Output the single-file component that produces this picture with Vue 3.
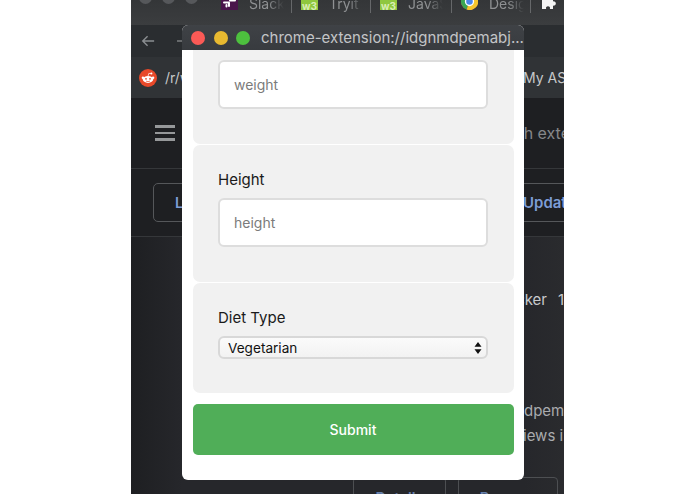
<script setup>
const tabs = [
  { name: 'Slack', icon: 'slack', width: 71 },
  { name: 'Tryit', icon: 'w3', width: 70 },
  { name: 'JavaScript', icon: 'w3', width: 72 },
  { name: 'Design', icon: 'chrome', width: 70 }
]
</script>

<template>
  <div class="stage">
    <div class="browser">
      <div class="tabs">
        <div class="lights"><i></i><i></i><i></i></div>
        <div v-for="tab in tabs" :key="tab.name" class="tab" :style="{ width: tab.width + 'px' }">
          <svg v-if="tab.icon === 'slack'" class="tab-icon" viewBox="0 0 17 17">
            <rect width="17" height="17" fill="#4a154b" />
            <path d="M3 9.5h5M9 7.5h5M5.5 12v1.5M11 5v2M8 10v3" stroke="#fff" stroke-width="2" stroke-linecap="round" fill="none" />
          </svg>
          <span v-else-if="tab.icon === 'w3'" class="tab-icon w3">w3</span>
          <svg v-else class="tab-icon" viewBox="0 0 18 18">
            <circle cx="9" cy="9" r="9" fill="#d8433a" />
            <path d="M9 9 1.2 4.5A9 9 0 0 0 6 17.5Z" fill="#3ba653" />
            <path d="M9 9 17.6 6A9 9 0 0 1 6 17.5Z" fill="#f5c52d" />
            <circle cx="9" cy="9" r="4.2" fill="#4a86e8" stroke="#fff" stroke-width="1.4" />
          </svg>
          <span class="tab-name">{{ tab.name }}</span>
        </div>
        <svg class="puzzle" viewBox="0 0 16 16">
          <path d="M1 4h11v3.4a2.2 2.2 0 1 1 0 4.2V15H8.8a2 2 0 1 0-3.6 0H1Z" fill="#f4f4f4" />
        </svg>
      </div>

      <div class="toolbar">
        <svg class="back" viewBox="0 0 16 14">
          <path d="M15 7H2M7.5 1.5 2 7l5.5 5.5" fill="none" stroke="#8b8e91" stroke-width="1.6" />
        </svg>
        <svg class="forward" viewBox="0 0 16 14">
          <path d="M0 7h15" fill="none" stroke="#77797c" stroke-width="1.6" />
        </svg>
      </div>

      <div class="bookmarks">
        <svg class="reddit" viewBox="0 0 18 18">
          <circle cx="9" cy="9" r="9" fill="#e8492a" />
          <ellipse cx="9" cy="10.4" rx="5.2" ry="3.5" fill="#fff" />
          <circle cx="3.9" cy="8.7" r="1.2" fill="#fff" />
          <circle cx="14.1" cy="8.7" r="1.2" fill="#fff" />
          <circle cx="12.4" cy="4.5" r="1" fill="#fff" />
          <path d="M9 7.2 9.8 4.4l2.4.2" fill="none" stroke="#fff" stroke-width=".7" />
          <circle cx="7" cy="9.8" r=".9" fill="#e8492a" />
          <circle cx="11" cy="9.8" r=".9" fill="#e8492a" />
          <path d="M7 12c1.2.8 2.8.8 4 0" fill="none" stroke="#e8492a" stroke-width=".7" />
        </svg>
        <span class="bookmark">/r/webdev</span>
        <span class="bookmark right">My ASU</span>
      </div>

      <div class="header">
        <div class="menu"><i></i><i></i><i></i></div>
        <span class="search">Search extensions</span>
      </div>

      <div class="actions">
        <div class="action load">Load unpacked</div>
        <div class="action update">Update</div>
      </div>

      <div class="ext-list">
        <div class="ext-title"><span class="ext-name">Diet Tracker</span><span class="ext-version">1.0</span></div>
        <div class="ext-id">dpemabjkl</div>
        <div class="ext-views">iews in</div>
        <div class="ext-buttons">
          <div class="ext-button details">Details</div>
          <div class="ext-button remove">Remove</div>
        </div>
      </div>
    </div>

    <div class="popup">
      <div class="titlebar">
        <div class="traffic"><i class="red"></i><i class="amber"></i><i class="green"></i></div>
        <span class="url">chrome-extension://idgnmdpemabj...</span>
      </div>
      <form class="body" @submit.prevent>
        <div class="card clipped">
          <input class="field" type="text" placeholder="weight" />
        </div>
        <div class="card">
          <label class="label">Height</label>
          <input class="field" type="text" placeholder="height" />
        </div>
        <div class="card last">
          <label class="label">Diet Type</label>
          <div class="select-wrap">
            <select class="select">
              <option>Vegetarian</option>
              <option>Vegan</option>
            </select>
            <svg class="select-arrows" viewBox="0 0 8 12">
              <path d="M4 0 7.5 4.8H.5ZM4 12 .5 7.2h7Z" fill="#111" />
            </svg>
          </div>
        </div>
        <button class="submit" type="submit">Submit</button>
      </form>
    </div>
  </div>
</template>

<style>
html, body { margin: 0; background: #fff; }
</style>

<style scoped>
.stage {
  position: relative;
  width: 695px;
  height: 494px;
  overflow: hidden;
  background: #fff;
  font-family: Inter, "Liberation Sans", sans-serif;
}
.browser {
  display: flex;
  flex-direction: column;
  width: 433px;
  height: 494px;
  margin-left: 131px;
  overflow: hidden;
  background: linear-gradient(90deg, #1e1f22, #26272b 52px, #26272b 393px, #2a2b2e);
}
.tabs {
  flex: 0 0 25px;
  display: flex;
  align-items: flex-start;
  overflow: hidden;
  background: linear-gradient(#343638, #3b3d3f);
}
.lights {
  display: flex;
  gap: 10px;
  width: 90px;
  margin-top: -9px;
  padding-left: 8px;
  box-sizing: border-box;
}
.lights i {
  width: 13px;
  height: 13px;
  border-radius: 50%;
  background: #56585b;
}
.tab {
  flex: 0 0 auto;
  box-sizing: border-box;
  display: flex;
  align-items: center;
  height: 20px;
  margin-top: -7px;
  margin-right: 9px;
  overflow: hidden;
  border-right: 1px solid #66686a;
}
.tab-icon {
  flex: 0 0 17px;
  width: 17px;
  height: 17px;
  margin-top: -4px;
}
.w3 {
  box-sizing: border-box;
  background: #8fc73e;
  color: #d9eeb4;
  font-size: 10px;
  line-height: 26px;
  text-align: center;
  font-weight: 700;
}
.tab-name {
  margin-left: 11px;
  width: 35px;
  overflow: hidden;
  white-space: nowrap;
  color: #8f9193;
  font-size: 14px;
  -webkit-mask-image: linear-gradient(90deg, #000 55%, transparent);
  mask-image: linear-gradient(90deg, #000 55%, transparent);
}
.puzzle {
  flex: 0 0 16px;
  width: 16px;
  height: 16px;
  margin-top: -6px;
  margin-left: 1px;
}
.toolbar {
  flex: 0 0 32px;
  display: flex;
  align-items: center;
  padding-left: 10px;
  background: #2a2d30;
}
.back {
  width: 14px;
  height: 14px;
  margin-top: -1px;
}
.forward {
  width: 16px;
  height: 14px;
  margin-top: -1px;
  margin-left: 22px;
}
.bookmarks {
  flex: 0 0 41px;
  display: flex;
  align-items: center;
  box-sizing: border-box;
  padding-left: 8px;
  background: #303336;
}
.reddit {
  width: 18px;
  height: 18px;
}
.bookmark {
  margin-left: 8px;
  color: #c6c8ca;
  font-size: 14px;
  white-space: nowrap;
}
.bookmark.right {
  margin-left: auto;
  width: 41px;
  overflow: hidden;
}
.header {
  flex: 0 0 71px;
  display: flex;
  align-items: center;
  box-sizing: border-box;
  border-bottom: 1px solid #35373a;
  padding-left: 24px;
  overflow: hidden;
  background: #1e1f22;
}
.menu {
  flex: 0 0 20px;
  display: flex;
  flex-direction: column;
  gap: 4px;
}
.menu i {
  height: 2.5px;
  background: #96989a;
}
.search {
  flex: 0 0 auto;
  margin-left: 305px;
  white-space: nowrap;
  color: #85878a;
  font-size: 16px;
}
.actions {
  flex: 0 0 68px;
  display: flex;
  align-items: center;
  justify-content: space-between;
  box-sizing: border-box;
  border-bottom: 1px solid #35373a;
  padding-left: 22px;
  overflow: hidden;
  background: #1e1f22;
}
.action {
  box-sizing: border-box;
  height: 39px;
  display: flex;
  align-items: center;
  border: 1px solid #55575a;
  color: #7d9dd6;
  font-size: 14.5px;
  font-weight: 600;
  white-space: nowrap;
}
.load {
  width: 130px;
  padding-left: 21px;
  border-radius: 5px;
}
.update {
  flex: 0 0 41px;
  overflow: hidden;
  border-left: 0;
  border-right: 0;
  font-size: 15px;
}
.ext-list {
  flex: 1;
  display: flex;
  flex-direction: column;
  color: #a9abae;
  font-size: 15px;
  white-space: nowrap;
  overflow: hidden;
}
.ext-title {
  display: flex;
  margin-top: 53px;
}
.ext-name {
  flex: 0 0 428px;
  margin-left: -12px;
  text-align: right;
  color: #c8cacc;
}
.ext-version {
  margin-left: 11px;
  color: #c8cacc;
}
.ext-id {
  margin-top: 92px;
  padding-left: 393px;
}
.ext-views {
  margin-top: 6px;
  padding-left: 392px;
}
.ext-buttons {
  display: flex;
  gap: 12px;
  margin-top: 32px;
  padding-left: 222px;
}
.ext-button {
  flex: 0 0 auto;
  box-sizing: border-box;
  height: 40px;
  padding-top: 11px;
  border: 1px solid #4d4f52;
  border-radius: 4px;
  color: #6680ad;
  font-size: 14.5px;
  font-weight: 600;
  text-align: center;
}
.details { width: 93px; }
.remove { width: 100px; }

.popup {
  position: absolute;
  left: 182px;
  top: 25px;
  width: 342px;
  height: 455px;
  display: flex;
  flex-direction: column;
  border-radius: 6px;
  overflow: hidden;
  background: #fff;
}
.titlebar {
  flex: 0 0 25px;
  display: flex;
  align-items: center;
  background: linear-gradient(#3f4246, #383b3f);
}
.traffic {
  display: flex;
  gap: 8.5px;
  width: 79px;
  padding-left: 9px;
  box-sizing: border-box;
}
.traffic i {
  width: 14px;
  height: 14px;
  border-radius: 50%;
}
.red { background: #fb5a56; }
.amber { background: #e8b930; }
.green { background: #4dc03e; }
.url {
  color: #c3c5c7;
  font-size: 15px;
  white-space: nowrap;
}
.body {
  flex: 1;
  display: flex;
  flex-direction: column;
  gap: 1px;
  margin: 0;
  padding: 0 10.5px;
}
.card {
  display: flex;
  flex-direction: column;
  padding: 25px 25.5px 35px;
  background: #f1f1f1;
  border-radius: 7px;
}
.card.clipped {
  padding-top: 10px;
  border-radius: 0 0 7px 7px;
}
.card.last {
  padding-bottom: 34px;
}
.label {
  margin-bottom: 9px;
  color: #1a1a1a;
  font-size: 15px;
  line-height: 19px;
}
.field {
  box-sizing: border-box;
  width: 270px;
  height: 49px;
  padding: 0 14px;
  border: 2px solid #dddddd;
  border-radius: 6px;
  background: #fff;
  outline: none;
  font: 14px Inter, "Liberation Sans", sans-serif;
}
.field::placeholder {
  color: #7b7b7b;
  opacity: 1;
}
.select-wrap {
  position: relative;
  width: 270px;
}
.select {
  display: block;
  box-sizing: border-box;
  width: 270px;
  height: 23px;
  padding: 0 8px;
  appearance: none;
  -webkit-appearance: none;
  border: 2px solid #d8d8d8;
  border-radius: 6px;
  background: linear-gradient(#fbfbfb, #f2f2f2);
  color: #111;
  font: 13.6px Inter, "Liberation Sans", sans-serif;
}
.select-arrows {
  position: absolute;
  right: 6.5px;
  top: 5.5px;
  width: 8px;
  height: 12px;
}
.submit {
  height: 51px;
  margin-top: 10px;
  border: 0;
  border-radius: 5px;
  background: #50ae58;
  color: #fff;
  font: 500 14px Inter, "Liberation Sans", sans-serif;
}
</style>
